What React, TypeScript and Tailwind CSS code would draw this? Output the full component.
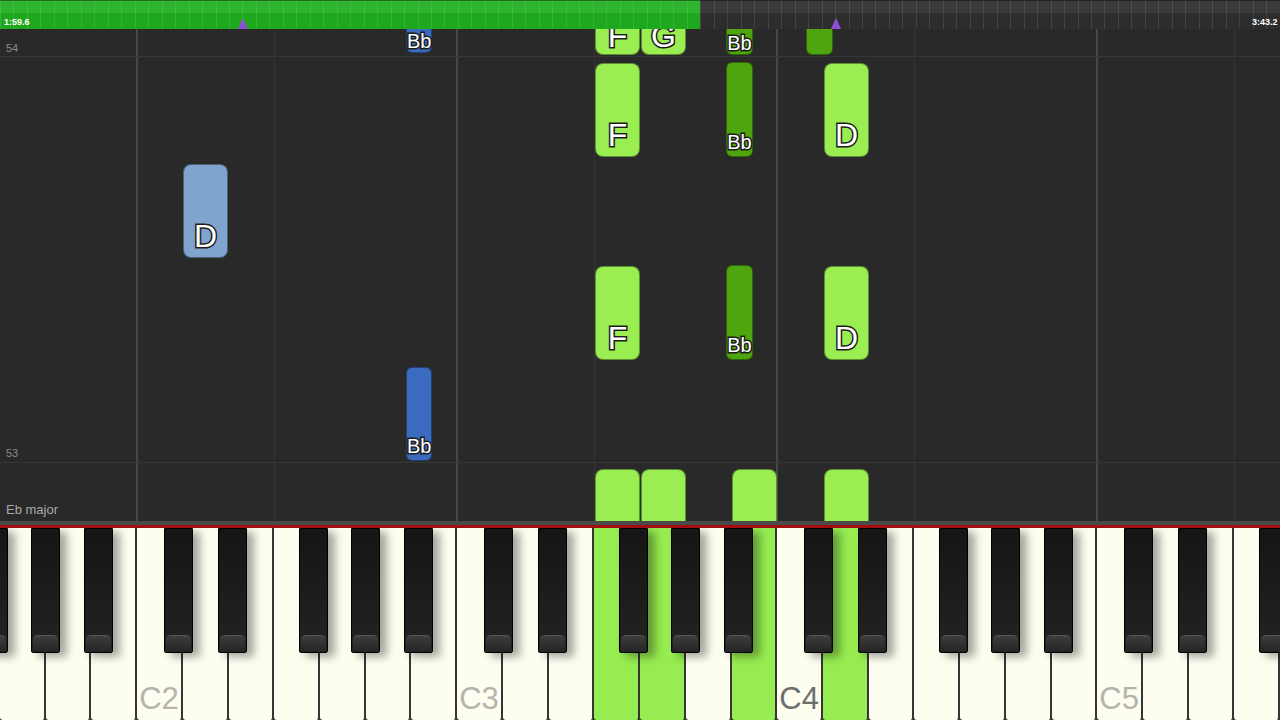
import React from 'react';

const KEY_W = 1280 / 28;
const NAMES = ['G', 'A', 'B', 'C', 'D', 'E', 'F'];
const BLACK_OFFSET: Record<string, number> = { G: 0, A: 7, C: -4, D: 4, F: -7 };
const LIT = [13, 14, 16, 18];
const KEY_LABELS: Record<number, { text: string; dark?: boolean }> = {
  3: { text: 'C2' },
  10: { text: 'C3' },
  17: { text: 'C4', dark: true },
  24: { text: 'C5' },
};

// black keys sit on the boundary after G, A, C, D, F (first one is F#1 hanging off the left edge)
const blackKeys: number[] = [-7 - 14.5];
for (let i = 0; i < 28; i++) {
  const n = NAMES[i % 7];
  if (n in BLACK_OFFSET) blackKeys.push((i + 1) * KEY_W + BLACK_OFFSET[n] - 14.5);
}

type Kind = 'lime' | 'green' | 'sky' | 'blue';
type Note = { x: number; w: number; top: number; bottom: number; kind: Kind; label?: string; open?: boolean; low?: boolean };

const NOTES: Note[] = [
  { x: 406, w: 26, top: -60, bottom: 53, kind: 'blue', label: 'Bb', low: true },
  { x: 406, w: 26, top: 367, bottom: 461, kind: 'blue', label: 'Bb' },
  { x: 183, w: 45, top: 164, bottom: 258, kind: 'sky', label: 'D' },
  { x: 595, w: 45, top: -60, bottom: 55, kind: 'lime', label: 'F', low: true },
  { x: 641, w: 45, top: -60, bottom: 55, kind: 'lime', label: 'G', low: true },
  { x: 726, w: 27, top: -60, bottom: 55, kind: 'green', label: 'Bb', low: true },
  { x: 806, w: 27, top: -60, bottom: 55, kind: 'green' },
  { x: 595, w: 45, top: 63, bottom: 157, kind: 'lime', label: 'F' },
  { x: 726, w: 27, top: 62, bottom: 157, kind: 'green', label: 'Bb' },
  { x: 824, w: 45, top: 63, bottom: 157, kind: 'lime', label: 'D' },
  { x: 595, w: 45, top: 266, bottom: 360, kind: 'lime', label: 'F' },
  { x: 726, w: 27, top: 265, bottom: 360, kind: 'green', label: 'Bb' },
  { x: 824, w: 45, top: 266, bottom: 360, kind: 'lime', label: 'D' },
  { x: 595, w: 45, top: 469, bottom: 540, kind: 'lime', open: true },
  { x: 641, w: 45, top: 469, bottom: 540, kind: 'lime', open: true },
  { x: 732, w: 45, top: 469, bottom: 540, kind: 'lime', open: true },
  { x: 824, w: 45, top: 469, bottom: 540, kind: 'lime', open: true },
];

const KIND_BG: Record<Kind, string> = {
  lime: 'bg-[#9aee52]',
  green: 'bg-[#4fa50e]',
  sky: 'bg-[#7fa4cd]',
  blue: 'bg-[#3a6bbe]',
};

const outline = '[-webkit-text-stroke:3px_#1c1c1c] [paint-order:stroke_fill]';

function NoteBlock({ n }: { n: Note }) {
  const wide = n.w > 40;
  let pos = wide ? 'bottom-[5px] text-[32px]' : 'bottom-[4px] text-[20px]';
  if (n.low) pos = wide ? 'bottom-[2px] text-[32px]' : 'bottom-[1px] text-[20px]';
  return (
    <div
      className={`absolute border border-black/40 ${n.open ? 'rounded-t-lg' : wide ? 'rounded-lg' : 'rounded-md'} ${KIND_BG[n.kind]}`}
      style={{ left: n.x, width: n.w, top: n.top - 29, height: n.bottom - n.top }}
    >
      {n.label && (
        <div className={`absolute inset-x-0 text-center leading-none text-white ${outline} ${pos}`}>{n.label}</div>
      )}
    </div>
  );
}

function TopBar() {
  return (
    <div className="relative flex h-[29px] shrink-0 overflow-hidden">
      <div className="flex w-[700px] flex-col">
        <div className="h-[13px] bg-[#2fb42f]" />
        <div className="flex-1 bg-[#1ea81e]" />
      </div>
      <div className="flex flex-1 flex-col">
        <div className="h-[13px] bg-[#3a3a3a]" />
        <div className="flex-1 bg-[#2d2d2d]" />
      </div>
      <div className="absolute inset-0 flex">
        {Array.from({ length: 95 }).map((_, i) => (
          <div key={i} className="flex-1 border-l border-white/10" />
        ))}
      </div>
      <div className="absolute inset-x-0 top-0 h-px bg-black/40" />
      <span className="absolute left-[4px] top-[18px] text-[9px] font-bold leading-none text-white">1:59.6</span>
      <span className="absolute left-[1252px] top-[18px] text-[9px] font-bold leading-none text-white">3:43.2</span>
      <svg className="absolute left-[238px] top-[18px]" width="10" height="11" viewBox="0 0 10 11">
        <path d="M5 0 L10 11 L0 11 Z" fill="#8e4fd6" />
      </svg>
      <svg className="absolute left-[831px] top-[18px]" width="10" height="11" viewBox="0 0 10 11">
        <path d="M5 0 L10 11 L0 11 Z" fill="#8e4fd6" />
      </svg>
    </div>
  );
}

function Roll() {
  return (
    <div className="relative h-[492px] shrink-0 overflow-hidden bg-[#292929]">
      {/* key columns: brighter line on every C, faint line on every F */}
      <div className="absolute inset-0 flex">
        {Array.from({ length: 28 }).map((_, i) => {
          const n = NAMES[i % 7];
          return (
            <div
              key={i}
              className={`flex-1 ${n === 'C' ? 'border-l-2 border-[#474747]' : n === 'F' ? 'border-l border-[#333333]' : ''}`}
            />
          );
        })}
      </div>
      <div className="relative flex h-full flex-col text-[#8a8a8a]">
        <div className="flex h-[28px] items-end border-b border-[#383838] pb-[2px] pl-[6px] text-[11px] leading-none">54</div>
        <div className="flex h-[406px] items-end border-b border-[#383838] pb-[3px] pl-[6px] text-[11px] leading-none">53</div>
        <div className="flex flex-1 items-end pb-[5px] pl-[6px] text-[13px] leading-none text-[#a8a8a8]">Eb major</div>
      </div>
      {NOTES.map((n, i) => (
        <NoteBlock key={i} n={n} />
      ))}
    </div>
  );
}

function Keyboard() {
  return (
    <div className="relative flex h-[192px] shrink-0 overflow-hidden bg-[#333]">
      {Array.from({ length: 28 }).map((_, i) => {
        const lbl = KEY_LABELS[i];
        return (
          <div
            key={i}
            className={`flex flex-1 items-end justify-center rounded-b-[3px] border-r-2 border-[#353535] pb-[6px] ${
              LIT.includes(i) ? 'bg-[#96ec50]' : 'bg-[#fdfdf0]'
            }`}
          >
            {lbl && (
              <span className={`text-[31px] leading-none ${lbl.dark ? 'text-[#6e6e6e]' : 'text-[#b4b4ac]'}`}>{lbl.text}</span>
            )}
          </div>
        );
      })}
      {blackKeys.map((left, i) => (
        <div
          key={i}
          className="absolute top-0 z-10 flex h-[125px] w-[29px] flex-col justify-end rounded-b-[2px] border border-black bg-gradient-to-b from-[#151515] to-[#232323] pb-px shadow-[7px_4px_8px_rgba(0,0,0,0.35)]"
          style={{ left }}
        >
          <div className="mx-px h-[16px] rounded-t-[5px] border-t border-[#555] bg-gradient-to-b from-[#3c3c3c] to-[#262626]" />
        </div>
      ))}
    </div>
  );
}

export default function App() {
  return (
    <div className="flex h-[720px] w-[1280px] flex-col overflow-hidden bg-[#292929] font-['Liberation_Sans',Arial,sans-serif]">
      <TopBar />
      <Roll />
      <div className="h-[4px] shrink-0 bg-[#4a4a4a]" />
      <div className="h-[3px] shrink-0 bg-[#a30e0e]" />
      <Keyboard />
    </div>
  );
}
